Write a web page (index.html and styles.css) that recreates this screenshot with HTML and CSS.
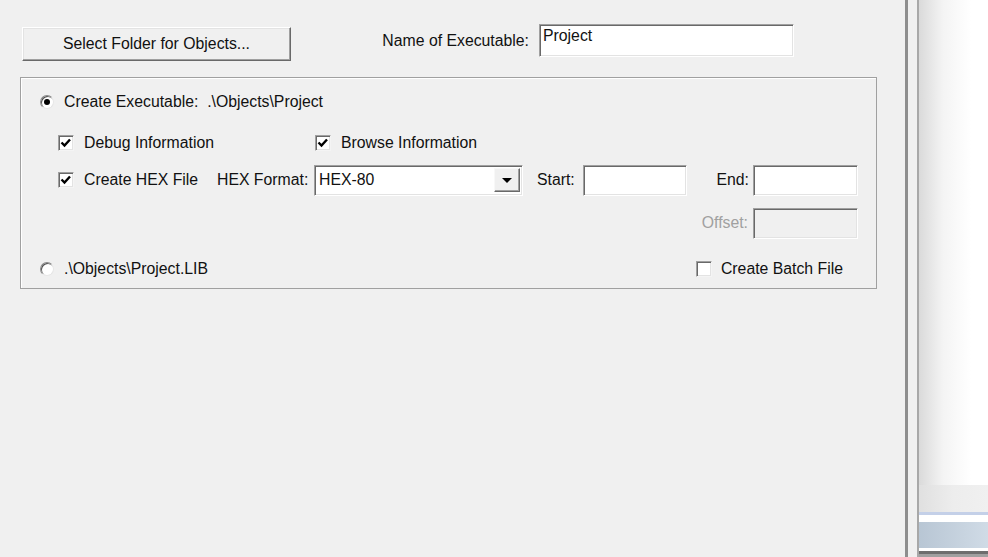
FILE: index.html
```html
<!DOCTYPE html>
<html lang="en">

<head>
    <meta charset="UTF-8">
    <meta name="viewport" content="width=device-width, initial-scale=1.0">
    <title>Output Options</title>
    <link rel="stylesheet" href="styles.css">
</head>

<body>

    <div class="main">
        <div class="top-row">
            <button class="btn">Select Folder for Objects...</button>
            <label class="name-label">Name of Executable:</label>
            <div class="field name-field">Project</div>
        </div>

        <div class="group">
            <div class="row row-exe">
                <span class="radio checked"></span>
                <span class="text">Create Executable:  .\Objects\Project</span>
            </div>

            <div class="row row-checks">
                <div class="check-item debug">
                    <span class="check"><svg viewBox="0 0 14 14"><polyline points="2.5,6.5 5.5,9.5 11,3.5"/></svg></span>
                    <span>Debug Information</span>
                </div>
                <div class="check-item">
                    <span class="check"><svg viewBox="0 0 14 14"><polyline points="2.5,6.5 5.5,9.5 11,3.5"/></svg></span>
                    <span>Browse Information</span>
                </div>
            </div>

            <div class="row row-hex">
                <div class="check-item hexfile">
                    <span class="check"><svg viewBox="0 0 14 14"><polyline points="2.5,6.5 5.5,9.5 11,3.5"/></svg></span>
                    <span>Create HEX File</span>
                </div>
                <label class="lbl hex-lbl">HEX Format:</label>
                <div class="field select">
                    <span class="select-value">HEX-80</span>
                    <span class="select-btn"><span class="arrow"></span></span>
                </div>
                <label class="lbl start-lbl">Start:</label>
                <div class="field addr"></div>
                <label class="lbl end-lbl">End:</label>
                <div class="field addr end"></div>
            </div>

            <div class="row row-offset">
                <label class="lbl disabled">Offset:</label>
                <div class="field addr end disabled-field"></div>
            </div>

            <div class="row row-lib">
                <span class="radio"></span>
                <span class="text">.\Objects\Project.LIB</span>
                <div class="check-item batch">
                    <span class="check"></span>
                    <span>Create Batch File</span>
                </div>
            </div>
        </div>
    </div>

    <div class="splitter"></div>

    <div class="side">
        <div class="side-body"></div>
        <div class="side-tabs"></div>
        <div class="side-bar"></div>
    </div>

</body>

</html>
```

FILE: styles.css
```css
* {
    box-sizing: border-box;
    margin: 0;
    padding: 0;
}

body {
    font-family: "Liberation Sans", Arial, sans-serif;
    font-size: 15.8px;
    color: #111;
    background-color: #f0f0f0;
    display: flex;
    height: 557px;
    overflow: hidden;
}

.main {
    width: 905px;
    padding: 24px 0 0 20px;
}

/* top row */

.top-row {
    display: flex;
    align-items: flex-start;
}

.btn {
    font-family: inherit;
    font-size: inherit;
    color: #111;
    margin: 3px 0 0 2px;
    width: 269px;
    height: 34px;
    background-color: #f0f0f0;
    border: 1px solid;
    border-color: #fff #696969 #696969 #fff;
    box-shadow: inset -1px -1px #a0a0a0, inset 1px 1px #e3e3e3;
}

.name-label {
    width: 238px;
    text-align: right;
    line-height: 33px;
}

.field {
    background-color: #fff;
    border: 1px solid;
    border-color: #a0a0a0 #fff #fff #a0a0a0;
    box-shadow: inset 1px 1px #696969, inset -1px -1px #e3e3e3;
}

.name-field {
    margin-left: 10px;
    width: 255px;
    height: 33px;
    padding: 2px 0 0 3px;
    line-height: 18px;
}

/* group box */

.group {
    margin-top: 16px;
    width: 857px;
    height: 212px;
    border: 1px solid #a0a0a0;
    box-shadow: inset 1px 1px #fff;
    padding: 14px 18px 0 19px;
}

.row {
    display: flex;
    align-items: center;
}

.row-exe,
.row-lib {
    height: 20px;
}

.row-exe .text,
.row-lib .text {
    white-space: pre;
    margin-left: 10px;
}

.radio {
    width: 14px;
    height: 14px;
    border-radius: 50%;
    background-color: #fff;
    border: 1px solid;
    border-color: #8a8a8a #e6e6e6 #e6e6e6 #8a8a8a;
    box-shadow: inset 1px 1px #505050;
    display: flex;
    align-items: center;
    justify-content: center;
}

.radio.checked::after {
    content: "";
    width: 6px;
    height: 6px;
    border-radius: 50%;
    background-color: #000;
}

.check-item {
    display: flex;
    align-items: center;
    gap: 10px;
}

.check {
    width: 16px;
    height: 16px;
    background-color: #fff;
    border: 1px solid;
    border-color: #a0a0a0 #f4f4f4 #f4f4f4 #a0a0a0;
    box-shadow: inset 1px 1px #696969, inset -1px -1px #e3e3e3;
    display: flex;
}

.check svg {
    width: 14px;
    height: 14px;
    fill: none;
    stroke: #000;
    stroke-width: 2.4;
}

.row-checks {
    margin-top: 21px;
    height: 20px;
    padding-left: 18px;
}

.debug {
    width: 257px;
}

.row-hex {
    margin-top: 11px;
    height: 32px;
    padding-left: 18px;
}

.hexfile {
    width: 159px;
}

.lbl {
    text-align: right;
    white-space: nowrap;
}

.hex-lbl {
    width: 89px;
    margin-right: 8px;
}

.select {
    width: 209px;
    height: 31px;
    display: flex;
    align-items: center;
    padding: 0 2px 0 4px;
}

.select-value {
    flex: 1;
}

.select-btn {
    width: 26px;
    height: 24px;
    background-color: #f0f0f0;
    border: 1px solid;
    border-color: #f8f8f8 #696969 #696969 #f8f8f8;
    box-shadow: inset -1px -1px #a0a0a0;
    display: flex;
    align-items: center;
    justify-content: center;
}

.arrow {
    width: 0;
    height: 0;
    border-left: 5px solid transparent;
    border-right: 5px solid transparent;
    border-top: 5px solid #000;
}

.start-lbl {
    margin-left: 14px;
    width: 37px;
    margin-right: 9px;
}

.addr {
    width: 104px;
    height: 31px;
}

.end-lbl {
    margin-left: 27px;
    width: 35px;
    margin-right: 4px;
}

.addr.end {
    width: 105px;
}

.row-offset {
    margin-top: 11px;
    height: 32px;
    justify-content: flex-end;
}

.disabled {
    color: #a0a0a0;
    margin-right: 5px;
}

.disabled-field {
    background-color: #f0f0f0;
}

.row-lib {
    margin-top: 20px;
}

.batch {
    margin-left: auto;
    margin-right: 15px;
    gap: 9px;
}

/* splitter and right pane */

.splitter {
    width: 14px;
    border-left: 3px solid #8e8e8e;
    border-right: 2px solid #a8a8a8;
    background-color: #f0f0f0;
}

.side {
    flex: 1;
    display: flex;
    flex-direction: column;
}

.side-body {
    flex: 1;
    background: linear-gradient(to right, #dadada, #f4f4f4 35%, #fff 75%);
}

.side-tabs {
    height: 27px;
    background: linear-gradient(to right, #e0e0e0, #ededed 50%, #f0f0f0);
}

.side-bar {
    height: 45px;
    border-top: 3px solid #c4d0e8;
    border-bottom: 3px solid #a0a0a0;
    padding: 7px 0 0;
    background-color: #fff;
}

.side-bar::before {
    content: "";
    display: block;
    height: 26px;
    background: linear-gradient(to right, #b8c6d4, #d0dbe6);
    border-bottom: 3px solid #fff;
    box-sizing: content-box;
}

.side-bar::after {
    content: "";
    display: block;
    height: 3px;
    background-color: #6e6e6e;
}
```
